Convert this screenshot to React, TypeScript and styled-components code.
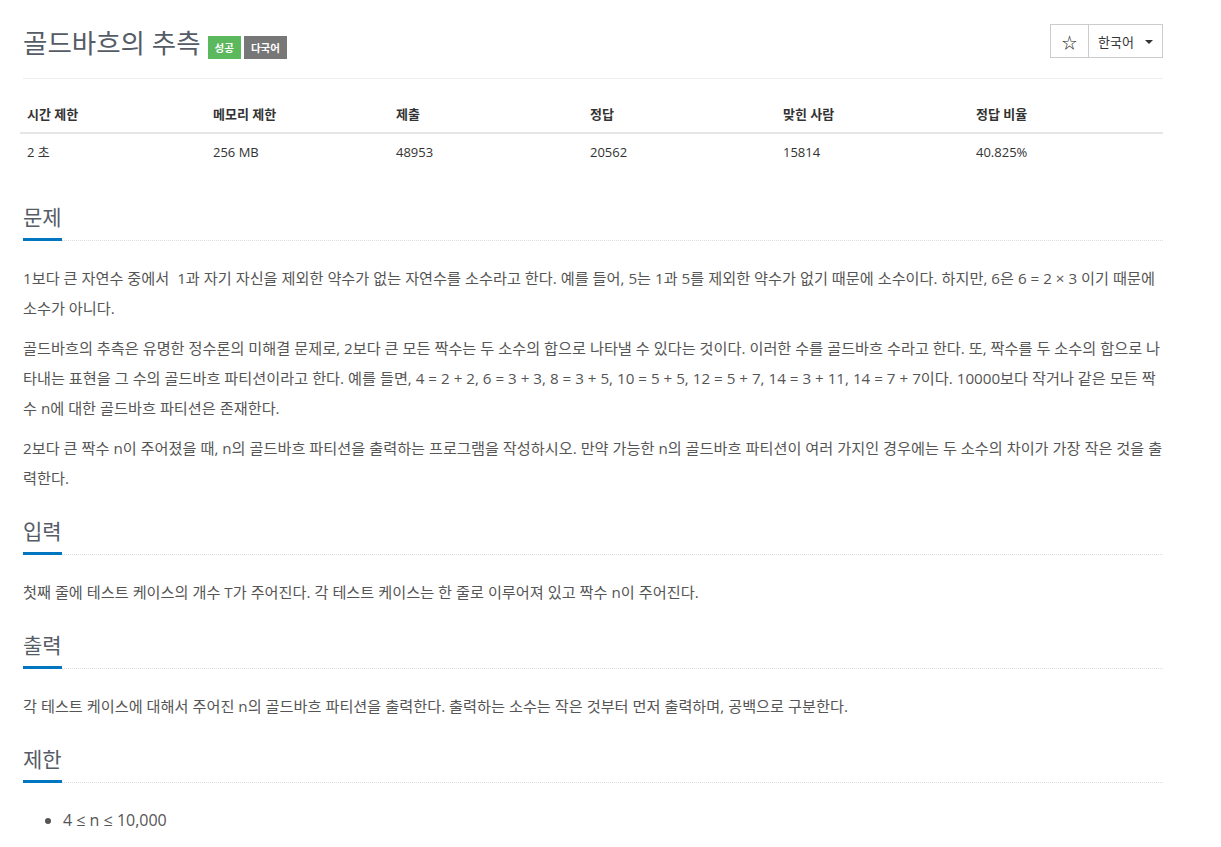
import React from "react";
import styled, { createGlobalStyle } from "styled-components";

const Global = createGlobalStyle`
  html, body { margin: 0; padding: 0; background: #fff; }
  body {
    font-family: "Open Sans", "Noto Sans CJK KR", sans-serif;
    color: #555;
    -webkit-font-smoothing: antialiased;
  }
  * { box-sizing: border-box; }
`;

const Page = styled.div`
  width: 1140px;
  margin-left: 23px;
  padding-top: 20px;
  padding-bottom: 20px;
`;

const Header = styled.div`
  display: flex;
  align-items: flex-start;
  justify-content: space-between;
  border-bottom: 1px solid #eee;
  padding: 4px 0 16px;
`;

const TitleRow = styled.div`
  display: flex;
  align-items: center;
  gap: 7px;
`;

const Title = styled.h1`
  margin: 0;
  font-size: 26.5px;
  font-weight: 400;
  line-height: 38px;
  color: #555c66;
`;

const Badges = styled.div`
  display: flex;
  gap: 3px;
  margin-top: 9px;
`;

const Badge = styled.span<{ $bg: string }>`
  display: inline-flex;
  align-items: center;
  justify-content: center;
  height: 23px;
  padding: 0 7px;
  background: ${(p) => p.$bg};
  color: #fff;
  font-size: 10.5px;
  font-weight: 700;
`;

const BtnGroup = styled.div`
  display: flex;
`;

const Btn = styled.div<{ $w: number }>`
  width: ${(p) => p.$w}px;
  height: 34px;
  border: 1px solid #ccc;
  display: flex;
  align-items: center;
  justify-content: center;
  gap: 11px;
  font-size: 13px;
  color: #333;
  background: #fff;
  & + & { border-left: none; }
`;

const Star = styled.span`
  font-size: 15px;
  color: #222;
`;

const Caret = styled.span`
  width: 0;
  height: 0;
  border-left: 4px solid transparent;
  border-right: 4px solid transparent;
  border-top: 4px solid #333;
  margin-top: 1px;
`;

const Table = styled.table`
  width: 1143px;
  margin: 18px 0 32px -3px;
  border-collapse: collapse;
  font-size: 13px;
  color: #333;
  th {
    text-align: left;
    font-weight: 700;
    padding: 8px 7px 9px;
    border-bottom: 2px solid #e6e6e6;
    line-height: 18px;
  }
  td {
    padding: 9px 7px;
    line-height: 18px;
  }
`;

const Section = styled.section`
  margin-top: 23px;
`;

const Headline = styled.div`
  border-bottom: 1px dotted #ddd;
  margin-bottom: 22px;
  line-height: 0;
`;

const H2 = styled.h2`
  display: inline-block;
  margin: 0 0 -1px;
  padding-bottom: 6px;
  font-size: 21px;
  font-weight: 400;
  line-height: 30px;
  color: #555c66;
  border-bottom: 3px solid #0076c0;
`;

const Text = styled.div`
  font-size: 15.2px;
  line-height: 30px;
  color: #555;
  p { margin: 0 0 10px; }
  p:last-child { margin-bottom: 0; }
`;

const List = styled.ul`
  margin: 0;
  padding-left: 40px;
  font-size: 16px;
  line-height: 30px;
  color: #555;
`;

const cols = [186, 183, 194, 193, 193, 194];

export default function App() {
  return (
    <>
      <Global />
      <Page>
        <Header>
          <TitleRow>
            <Title>골드바흐의 추측</Title>
            <Badges>
              <Badge $bg="#5cb85c">성공</Badge>
              <Badge $bg="#777">다국어</Badge>
            </Badges>
          </TitleRow>
          <BtnGroup>
            <Btn $w={39}>
              <Star>☆</Star>
            </Btn>
            <Btn $w={74}>
              <span>한국어</span>
              <Caret />
            </Btn>
          </BtnGroup>
        </Header>

        <Table>
          <colgroup>
            {cols.map((w, i) => (
              <col key={i} style={{ width: w }} />
            ))}
          </colgroup>
          <thead>
            <tr>
              <th>시간 제한</th>
              <th>메모리 제한</th>
              <th>제출</th>
              <th>정답</th>
              <th>맞힌 사람</th>
              <th>정답 비율</th>
            </tr>
          </thead>
          <tbody>
            <tr>
              <td>2 초</td>
              <td>256 MB</td>
              <td>48953</td>
              <td>20562</td>
              <td>15814</td>
              <td>40.825%</td>
            </tr>
          </tbody>
        </Table>

        <Section>
          <Headline>
            <H2>문제</H2>
          </Headline>
          <Text>
            <p>
              1보다 큰 자연수 중에서&nbsp; 1과 자기 자신을 제외한 약수가 없는 자연수를 소수라고 한다. 예를 들어, 5는 1과 5를 제외한 약수가 없기 때문에 소수이다. 하지만, 6은 6 = 2 × 3 이기 때문에 소수가 아니다.
            </p>
            <p>
              골드바흐의 추측은 유명한 정수론의 미해결 문제로, 2보다 큰 모든 짝수는 두 소수의 합으로 나타낼 수 있다는 것이다. 이러한 수를 골드바흐 수라고 한다. 또, 짝수를 두 소수의 합으로 나타내는 표현을 그 수의 골드바흐 파티션이라고 한다. 예를 들면, 4 = 2 + 2, 6 = 3 + 3, 8 = 3 + 5, 10 = 5 + 5, 12 = 5 + 7, 14 = 3 + 11, 14 = 7 + 7이다. 10000보다 작거나 같은 모든 짝수 n에 대한 골드바흐 파티션은 존재한다.
            </p>
            <p>
              2보다 큰 짝수 n이 주어졌을 때, n의 골드바흐 파티션을 출력하는 프로그램을 작성하시오. 만약 가능한 n의 골드바흐 파티션이 여러 가지인 경우에는 두 소수의 차이가 가장 작은 것을 출력한다.
            </p>
          </Text>
        </Section>

        <Section>
          <Headline>
            <H2>입력</H2>
          </Headline>
          <Text>
            <p>첫째 줄에 테스트 케이스의 개수 T가 주어진다. 각 테스트 케이스는 한 줄로 이루어져 있고 짝수 n이 주어진다.</p>
          </Text>
        </Section>

        <Section>
          <Headline>
            <H2>출력</H2>
          </Headline>
          <Text>
            <p>각 테스트 케이스에 대해서 주어진 n의 골드바흐 파티션을 출력한다. 출력하는 소수는 작은 것부터 먼저 출력하며, 공백으로 구분한다.</p>
          </Text>
        </Section>

        <Section>
          <Headline>
            <H2>제한</H2>
          </Headline>
          <List>
            <li>4 ≤ n ≤ 10,000</li>
          </List>
        </Section>
      </Page>
    </>
  );
}
